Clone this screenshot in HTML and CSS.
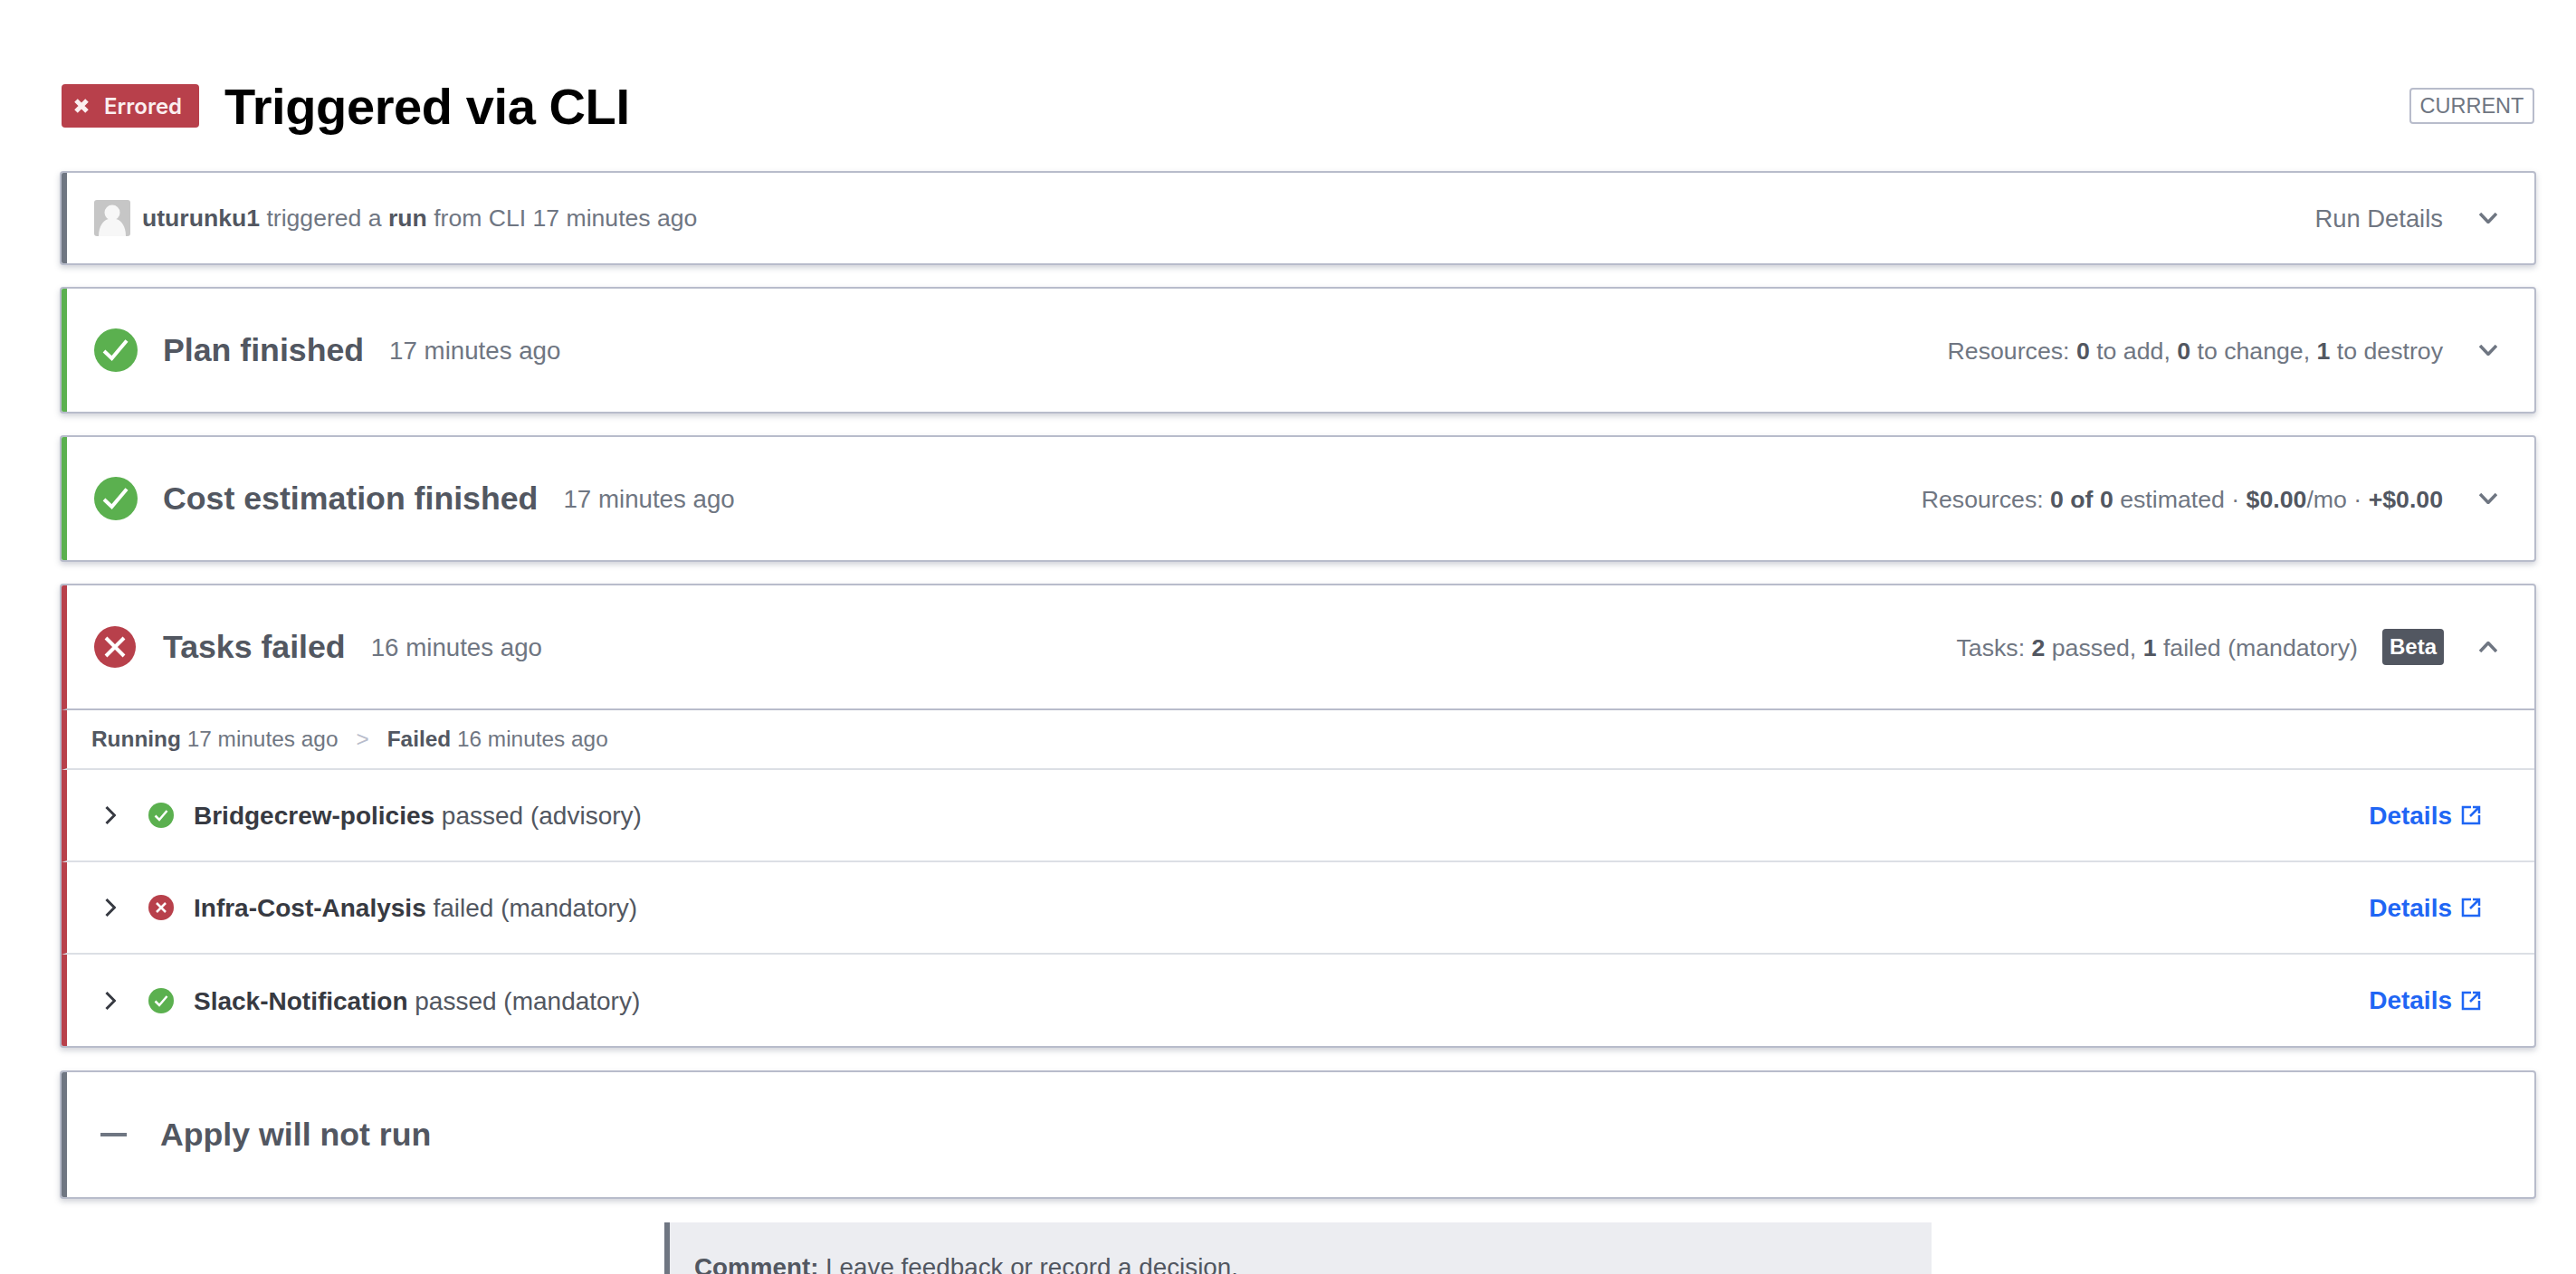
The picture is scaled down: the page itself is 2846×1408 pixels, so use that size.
FILE: index.html
```html
<!DOCTYPE html>
<html lang="en">
<head>
<meta charset="utf-8">
<title>Triggered via CLI</title>
<link rel="stylesheet" href="styles.css">
</head>
<body>
<main class="page">
  <header class="head">
    <span class="status-badge">
      <svg class="status-x" viewBox="0 0 16 16"><path d="M2 2l12 12M14 2L2 14"/></svg>
      Errored
    </span>
    <h1 class="title">Triggered via CLI</h1>
    <span class="current">CURRENT</span>
  </header>

  <div class="stack">
    <section class="card card-grey">
      <div class="bar bar-run">
        <svg class="avatar" viewBox="0 0 40 40"><rect width="40" height="40" rx="3" fill="#c6c6c6"/><circle cx="20" cy="14" r="8.5" fill="#f7f7f7"/><path d="M5 40c0-12 6-18 11-19h8c5 1 11 7 11 19z" fill="#f7f7f7"/></svg>
        <span class="run-text"><b>uturunku1</b> triggered a <b>run</b> from CLI 17 minutes ago</span>
        <span class="right-text run-details">Run Details</span>
        <svg class="chev" viewBox="0 0 20 12"><path d="M1 1L10 10.500 19 1"/></svg>
      </div>
    </section>

    <section class="card card-green">
      <div class="bar">
        <svg class="ico" viewBox="0 0 48 48"><circle cx="24" cy="24" r="24" fill="#5bb04f"/><path class="ico-mark" d="M11 25l8.500 8L36 13.500"/></svg>
        <h2 class="step">Plan finished</h2>
        <span class="ago">17 minutes ago</span>
        <span class="right-text">Resources: <b>0</b> to add, <b>0</b> to change, <b>1</b> to destroy</span>
        <svg class="chev" viewBox="0 0 20 12"><path d="M1 1L10 10.500 19 1"/></svg>
      </div>
    </section>

    <section class="card card-green">
      <div class="bar">
        <svg class="ico" viewBox="0 0 48 48"><circle cx="24" cy="24" r="24" fill="#5bb04f"/><path class="ico-mark" d="M11 25l8.500 8L36 13.500"/></svg>
        <h2 class="step">Cost estimation finished</h2>
        <span class="ago">17 minutes ago</span>
        <span class="right-text">Resources: <b>0 of 0</b> estimated · <b>$0.00</b>/mo · <b>+$0.00</b></span>
        <svg class="chev" viewBox="0 0 20 12"><path d="M1 1L10 10.500 19 1"/></svg>
      </div>
    </section>

    <section class="card card-red">
      <div class="bar bar-tasks">
        <svg class="ico ico-err" viewBox="0 0 46 46"><circle cx="23" cy="23" r="23" fill="#b8404b"/><path class="ico-mark" d="M13 13l20 20M33 13L13 33"/></svg>
        <h2 class="step">Tasks failed</h2>
        <span class="ago">16 minutes ago</span>
        <span class="right-text">Tasks: <b>2</b> passed, <b>1</b> failed (mandatory)</span>
        <span class="beta">Beta</span>
        <svg class="chev" viewBox="0 0 20 12"><path d="M1 11L10 1.500 19 11"/></svg>
      </div>
      <div class="timeline">
        <span><b>Running</b> 17 minutes ago</span>
        <span class="sep">&gt;</span>
        <span><b>Failed</b> 16 minutes ago</span>
      </div>
      <div class="task">
        <svg class="task-chev" viewBox="0 0 12 20"><path d="M1.500 1l9 9-9 9"/></svg>
        <svg class="task-ico" viewBox="0 0 28 28"><circle cx="14" cy="14" r="14" fill="#5bb04f"/><path class="task-mark" d="M7.500 14.500l4.500 4.500 8.500-10"/></svg>
        <span class="task-text"><b>Bridgecrew-policies</b> passed (advisory)</span>
        <a class="details" href="#">Details</a>
        <svg class="ext" viewBox="0 0 22 22"><path d="M11 2H2v18h18v-9M10 12L20 2M13 2h7v7"/></svg>
      </div>
      <div class="task">
        <svg class="task-chev" viewBox="0 0 12 20"><path d="M1.500 1l9 9-9 9"/></svg>
        <svg class="task-ico" viewBox="0 0 28 28"><circle cx="14" cy="14" r="14" fill="#b8404b"/><path class="task-mark" d="M9 9l10 10M19 9L9 19"/></svg>
        <span class="task-text"><b>Infra-Cost-Analysis</b> failed (mandatory)</span>
        <a class="details" href="#">Details</a>
        <svg class="ext" viewBox="0 0 22 22"><path d="M11 2H2v18h18v-9M10 12L20 2M13 2h7v7"/></svg>
      </div>
      <div class="task">
        <svg class="task-chev" viewBox="0 0 12 20"><path d="M1.500 1l9 9-9 9"/></svg>
        <svg class="task-ico" viewBox="0 0 28 28"><circle cx="14" cy="14" r="14" fill="#5bb04f"/><path class="task-mark" d="M7.500 14.500l4.500 4.500 8.500-10"/></svg>
        <span class="task-text"><b>Slack-Notification</b> passed (mandatory)</span>
        <a class="details" href="#">Details</a>
        <svg class="ext" viewBox="0 0 22 22"><path d="M11 2H2v18h18v-9M10 12L20 2M13 2h7v7"/></svg>
      </div>
    </section>

    <section class="card card-grey card-apply">
      <div class="bar bar-apply">
        <span class="minus"></span>
        <h2 class="step">Apply will not run</h2>
      </div>
    </section>
  </div>

  <aside class="comment"><b>Comment:</b> Leave feedback or record a decision.</aside>
</main>
</body>
</html>
```
FILE: styles.css
```css
* { box-sizing: border-box; }
html, body { margin: 0; height: 1408px; overflow: hidden; background: #fff; }
body { font-family: "Liberation Sans", Arial, sans-serif; color: #525761; }
b { font-weight: 700; }
.page { padding: 93px 44px 0 66px; }
.head { display: flex; align-items: center; height: 48px; margin-left: 2px; margin-bottom: 48px; }
.status-badge { display: flex; align-items: center; width: 152px; height: 48px; padding-left: 14px; gap: 17px; background: #b8404b; border-radius: 4px; color: #fbeff0; font-family: Inter, "Liberation Sans", sans-serif; font-size: 24px; font-weight: 600; }
.status-x { width: 16px; height: 16px; fill: none; stroke: #fbeff0; stroke-width: 5; }
.title { margin: 2px 0 0 28px; font-weight: 700; font-size: 56px; letter-spacing: -.4px; line-height: 64px; color: #000; }
.current { margin-left: auto; margin-right: 2px; height: 40px; width: 138px; display: flex; align-items: center; justify-content: center; border: 2px solid #b8bccb; border-radius: 4px; font-size: 23.5px; color: #6f7682; }
.stack { display: flex; flex-direction: column; gap: 24px; }
.card { border: 2px solid #b8bccb; border-radius: 4px; background: #fff; box-shadow: 0 3px 6px rgba(99, 105, 125, .3); overflow: hidden; }
.card-apply { margin-top: 1px; }
.card-grey > * { border-left: 6px solid #6f7682; }
.card-green > * { border-left: 6px solid #5bb04f; }
.card-red > * { border-left: 6px solid #b8404b; }
.bar { display: flex; align-items: center; height: 136px; padding: 0 41px 0 30px; font-size: 28px; }
.bar-run { height: 100px; }
.bar-tasks { border-bottom: 2px solid #b8bccb; height: 138px; }
.avatar { width: 40px; height: 40px; margin-right: 13px; }
.run-text { padding-top: 1px; font-size: 26.6px; color: #6f7682; }
.run-text b { color: #525761; }
.right-text { margin-left: auto; padding-top: 2px; font-size: 26.7px; color: #6f7682; }
.right-text b { color: #525761; }
.run-details { font-size: 27.4px; }
.chev { width: 20px; height: 12px; margin-left: 40px; fill: none; stroke: #6f7682; stroke-width: 3.5; }
.ico { width: 48px; height: 48px; margin-right: 28px; flex: none; }
.ico-err { width: 46px; height: 46px; margin-right: 30px; }
.ico-mark { fill: none; stroke: #fff; stroke-width: 4; }
.step { margin: 0; font-size: 35.7px; font-weight: 700; color: #525761; }
.ago { margin-left: 28px; padding-top: 2px; font-size: 27.7px; color: #6f7682; }
.beta { margin-left: 27px; width: 68px; height: 40px; display: flex; align-items: center; justify-content: center; background: #525761; border-radius: 4px; color: #fff; font-size: 24px; font-weight: 700; }
.bar-tasks .chev { margin-left: 39px; }
.timeline { display: flex; align-items: center; height: 66px; padding-left: 27px; font-size: 24.4px; color: #6f7682; border-bottom: 2px solid #dcdfe5; }
.timeline b { color: #525761; }
.sep { margin: 0 20px; color: #b8bccb; }
.task { display: flex; align-items: center; height: 102px; padding: 0 59px 0 42px; border-bottom: 2px solid #dcdfe5; font-size: 28px; color: #525761; }
.task:last-child { border-bottom: 0; height: 101px; }
.task-chev { width: 12px; height: 20px; fill: none; stroke: #373a42; stroke-width: 3; margin-right: 35px; }
.task-ico { width: 28px; height: 28px; margin-left: 1px; margin-right: 22px; }
.task-mark { fill: none; stroke: #fff; stroke-width: 2.500; }
.task-text { padding-top: 2px; }
.task-text b { color: #373a42; }
.details { margin-left: auto; padding-top: 1px; color: #1f66f4; font-weight: 700; text-decoration: none; }
.ext { width: 22px; height: 22px; margin-left: 10px; fill: none; stroke: #1f66f4; stroke-width: 2.500; }
.bar-apply { height: 138px; padding-left: 37px; }
.minus { width: 29px; height: 4px; margin-right: 37px; background: #6f7682; }
.comment { margin: 26px 668px 0 668px; height: 120px; padding: 34px 27px; border-left: 6px solid #6f7682; background: #ecedf1; font-size: 27.8px; color: #525761; }
```
